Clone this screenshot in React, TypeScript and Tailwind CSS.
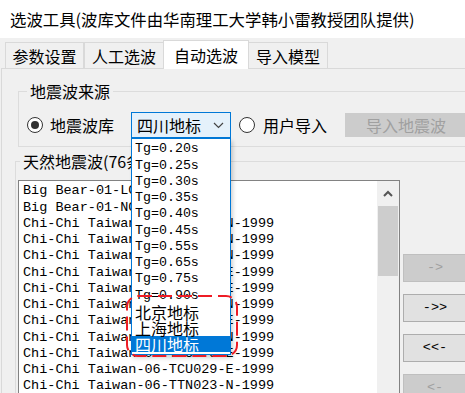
import React from "react";

const tgItems = [
  "Tg=0.20s",
  "Tg=0.25s",
  "Tg=0.30s",
  "Tg=0.35s",
  "Tg=0.40s",
  "Tg=0.45s",
  "Tg=0.55s",
  "Tg=0.65s",
  "Tg=0.75s",
  "Tg=0.90s",
];
const regionItems = ["北京地标", "上海地标", "四川地标"];

const rows = [
  "Big Bear-01-LCN-E-1992",
  "Big Bear-01-NCN-N-1992",
  "Chi-Chi Taiwan-06-CHY028-N-1999",
  "Chi-Chi Taiwan-06-CHY035-N-1999",
  "Chi-Chi Taiwan-06-CHY080-N-1999",
  "Chi-Chi Taiwan-06-HWA019-E-1999",
  "Chi-Chi Taiwan-06-TCU049-E-1999",
  "Chi-Chi Taiwan-06-TCU052-N-1999",
  "Chi-Chi Taiwan-06-TCU065-E-1999",
  "Chi-Chi Taiwan-06-TCU067-N-1999",
  "Chi-Chi Taiwan-06-TCU075-E-1999",
  "Chi-Chi Taiwan-06-TCU029-E-1999",
  "Chi-Chi Taiwan-06-TTN023-N-1999",
  "Chi-Chi Taiwan-06-TTN031-E-1999",
];

function Tab({ label, selected, w }: { label: string; selected?: boolean; w: string }) {
  if (selected) {
    return (
      <div
        className={`relative z-10 -mb-[1px] -mx-[1px] h-[29px] ${w} bg-white border border-b-0 border-[#d9d9d9] flex items-center justify-center text-[16px] leading-none`}
      >
        {label}
      </div>
    );
  }
  return (
    <div
      className={`h-[26px] ${w} bg-[#f0f0f0] border border-b-0 border-[#d9d9d9] flex items-center justify-center text-[16px] leading-none`}
    >
      {label}
    </div>
  );
}

function Radio({ checked }: { checked?: boolean }) {
  return (
    <div className="w-[16px] h-[16px] rounded-full border border-[#333333] bg-white flex items-center justify-center shrink-0">
      {checked && <div className="w-[8px] h-[8px] rounded-full bg-[#333333]" />}
    </div>
  );
}

export default function App() {
  return (
    <div className="relative w-[465px] h-[393px] overflow-hidden bg-[#f0f0f0] font-['Noto_Sans_CJK_SC','Noto_Sans',sans-serif] text-black">
      {/* title bar */}
      <div className="h-[38px] bg-white pl-[10px] flex items-center text-[16.4px] leading-none whitespace-nowrap">
        选波工具(波库文件由华南理工大学韩小雷教授团队提供)
      </div>

      {/* tabs */}
      <div className="h-[30px] flex items-end pl-[5px]">
        <Tab label="参数设置" w="w-[79px]" />
        <Tab label="人工选波" w="w-[80px]" />
        <Tab label="自动选波" w="w-[86px]" selected />
        <Tab label="导入模型" w="w-[80px]" />
      </div>

      {/* tab page */}
      <div className="ml-[1px] w-[520px] h-[330px] border-t border-l border-[#d9d9d9] bg-[#f0f0f0] flex flex-col">
        {/* group 1 */}
        <fieldset className="ml-[16px] mt-[11px] w-[480px] border border-[#dcdcdc] p-0 m-0">
          <legend className="ml-[8px] px-[3px] text-[16px] leading-[22px]">地震波来源</legend>
          <div className="mt-[10px] mb-[8px] h-[26px] flex items-center pl-[8px]">
            <Radio checked />
            <span className="ml-[7px] w-[64px] text-[16px] leading-none whitespace-nowrap">地震波库</span>
            <div className="relative ml-[17px] w-[100px] h-[26px] z-20">
              <div className="w-full h-full border border-[#0078d7] bg-[#e5f1fb] flex items-center pl-[5px] pr-[6px]">
                <span className="text-[16px] leading-none flex-1">四川地标</span>
                <svg width="11" height="7" viewBox="0 0 11 7">
                  <path d="M1 1 L5.5 5.5 L10 1" fill="none" stroke="#444" strokeWidth="1.2" />
                </svg>
              </div>
              {/* dropdown list */}
              <div className="absolute left-0 top-full w-[100px] border border-[#0078d7] bg-white pt-[2px] pb-[2px] shadow-[2px_3px_4px_rgba(0,0,0,0.18)]">
                {tgItems.map((t) => (
                  <div
                    key={t}
                    className="h-[16.25px] pl-[3px] flex items-center font-['Liberation_Mono',monospace] text-[13.3px] leading-none whitespace-nowrap"
                  >
                    {t}
                  </div>
                ))}
                {regionItems.map((t, i) => (
                  <div
                    key={t}
                    className={`h-[16.25px] pl-[3px] flex items-center text-[16px] leading-none whitespace-nowrap ${
                      i === 2 ? "bg-[#0078d7] text-white" : ""
                    }`}
                  >
                    {t}
                  </div>
                ))}
                {/* red annotation */}
                <svg
                  className="absolute left-[-6px] top-[156px] pointer-events-none"
                  width="112"
                  height="62"
                  viewBox="0 0 112 62"
                >
                  <rect
                    x="1"
                    y="1"
                    width="110"
                    height="60"
                    rx="11"
                    ry="11"
                    fill="none"
                    stroke="#ee1c25"
                    strokeWidth="2"
                    strokeDasharray="14 6"
                  />
                </svg>
              </div>
            </div>
            <div className="ml-[8px]">
              <Radio />
            </div>
            <span className="ml-[8px] w-[64px] text-[16px] leading-none whitespace-nowrap">用户导入</span>
            <div className="ml-[18px] w-[122px] h-[24px] bg-[#cccccc] flex items-center justify-center text-[16px] leading-none text-[#a0a0a0]">
              导入地震波
            </div>
          </div>
        </fieldset>

        {/* group 2 */}
        <fieldset className="ml-[13px] mt-[3px] w-[480px] border border-[#dcdcdc] p-0 m-0">
          <legend className="ml-[4px] px-[3px] text-[16px] leading-[22px] whitespace-nowrap">天然地震波(76条)</legend>
          <div className="mt-[8px] flex">
            <div className="ml-[2px] w-[382px] h-[230px] border border-[#828282] bg-white flex">
              <div className="flex-1 pl-[4px] pt-[2px] overflow-hidden">
                {rows.map((r, i) => (
                  <div
                    key={i}
                    className="h-[16.25px] flex items-center font-['Liberation_Mono',monospace] text-[13.5px] leading-none whitespace-pre"
                  >
                    {r}
                  </div>
                ))}
              </div>
              <div className="w-[22px] bg-[#f0f0f0] flex flex-col">
                <div className="h-[25px] flex items-center justify-center">
                  <svg width="10" height="7" viewBox="0 0 10 7">
                    <path d="M1 6 L5 2 L9 6" fill="none" stroke="#555" strokeWidth="2" />
                  </svg>
                </div>
                <div className="mx-[1px] h-[70px] bg-[#cdcdcd]" />
              </div>
            </div>
            <div className="ml-[3px] mt-[74px] flex flex-col gap-[12px]">
              <div className="w-[64px] h-[28px] bg-[#cccccc] border border-[#bfbfbf] flex items-center justify-center font-['Liberation_Mono',monospace] text-[13.5px] text-[#a0a0a0]">
                -&gt;
              </div>
              <div className="w-[64px] h-[28px] bg-[#e1e1e1] border border-[#adadad] flex items-center justify-center font-['Liberation_Mono',monospace] text-[13.5px]">
                -&gt;&gt;
              </div>
              <div className="w-[64px] h-[28px] bg-[#e1e1e1] border border-[#adadad] flex items-center justify-center font-['Liberation_Mono',monospace] text-[13.5px]">
                &lt;&lt;-
              </div>
              <div className="w-[64px] h-[28px] bg-[#cccccc] border border-[#bfbfbf] flex items-center justify-center font-['Liberation_Mono',monospace] text-[13.5px] text-[#a0a0a0]">
                &lt;-
              </div>
            </div>
          </div>
        </fieldset>
      </div>
    </div>
  );
}
